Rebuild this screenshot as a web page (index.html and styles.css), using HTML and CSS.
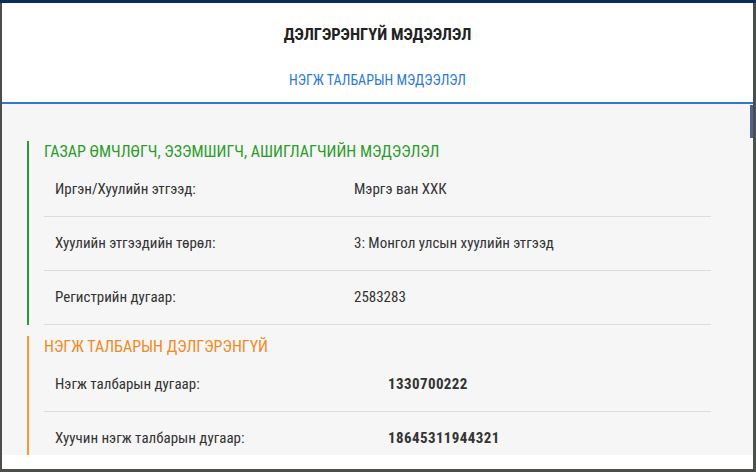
FILE: index.html
```html
<!DOCTYPE html>
<html lang="mn">
<head>
    <meta charset="UTF-8">
    <meta name="viewport" content="width=device-width, initial-scale=1.0">
    <title>Дэлгэрэнгүй мэдээлэл</title>
    <link rel="stylesheet" href="styles.css">
</head>
<body>
    <div class="topbar"></div>

    <div class="modal">
        <!-- Header -->
        <div class="modal-header">
            <h1>ДЭЛГЭРЭНГҮЙ МЭДЭЭЛЭЛ</h1>
            <div class="tabs">
                <span class="tab active">НЭГЖ ТАЛБАРЫН МЭДЭЭЛЭЛ</span>
            </div>
        </div>

        <!-- Scrollable body -->
        <div class="modal-body">
            <div class="scroll-thumb"></div>

            <div class="section green">
                <h2>ГАЗАР ӨМЧЛӨГЧ, ЭЗЭМШИГЧ, АШИГЛАГЧИЙН МЭДЭЭЛЭЛ</h2>
                <div class="row">
                    <span class="label">Иргэн/Хуулийн этгээд:</span>
                    <span class="value">Мэргэ ван ХХК</span>
                </div>
                <div class="row">
                    <span class="label">Хуулийн этгээдийн төрөл:</span>
                    <span class="value">3: Монгол улсын хуулийн этгээд</span>
                </div>
                <div class="row">
                    <span class="label">Регистрийн дугаар:</span>
                    <span class="value">2583283</span>
                </div>
            </div>

            <div class="section orange">
                <h2>НЭГЖ ТАЛБАРЫН ДЭЛГЭРЭНГҮЙ</h2>
                <div class="row wide">
                    <span class="label">Нэгж талбарын дугаар:</span>
                    <span class="value strong">1330700222</span>
                </div>
                <div class="row wide">
                    <span class="label">Хуучин нэгж талбарын дугаар:</span>
                    <span class="value strong">18645311944321</span>
                </div>
            </div>
        </div>

        <div class="modal-footer"></div>
    </div>
</body>
</html>
```

FILE: styles.css
```css
/* Reset */
body, html {
    margin: 0;
    padding: 0;
    width: 100%;
    height: 100%;
    overflow: hidden;
    font-family: Roboto, "Liberation Sans", sans-serif;
    font-stretch: 75%;
    background: #4b4f4c;
}

.topbar {
    height: 3px;
    background: #0d2c5c;
}

/* Modal box */
.modal {
    margin: 0 3px 0 2px;
    height: 466px;
    background: #fff;
    display: flex;
    flex-direction: column;
}

.modal-header {
    text-align: center;
    border-bottom: 2px solid #2f7ad0;
}

.modal-header h1 {
    margin: 0;
    padding-top: 22px;
    height: 26px;
    line-height: 20px;
    font-size: 16.5px;
    font-weight: bold;
    color: #222;
}

.tabs {
    padding: 19px 0 12px;
}

.tab {
    font-size: 14px;
    line-height: 20px;
    color: #2a7ad6;
}

/* Body */
.modal-body {
    position: relative;
    height: 351px;
    flex-shrink: 0;
    overflow: hidden;
    background: #f6f6f6;
    padding: 37px 42px 0 25px;
    box-sizing: border-box;
}

.scroll-thumb {
    position: absolute;
    top: 1px;
    right: 0;
    width: 3px;
    height: 33px;
    background: #4d6291;
}

.section {
    border-left: 2px solid;
    margin-bottom: 11px;
}

.section.green {
    border-color: #2c9a2c;
}

.section.orange {
    border-color: #f39a35;
}

.section h2 {
    margin: 0;
    padding-left: 15px;
    height: 22px;
    line-height: 22px;
    font-size: 16px;
    font-weight: normal;
}

.green h2 {
    color: #2a9c2a;
}

.orange h2 {
    color: #f08a24;
}

.row {
    margin-left: 15px;
    padding: 18px 11px;
    line-height: 17px;
    font-size: 15px;
    color: #333;
    display: flex;
    border-bottom: 1px solid #dcdcdc;
}

.label {
    width: 299px;
    flex-shrink: 0;
}

.row.wide .label {
    width: 333px;
}

.value.strong {
    font-weight: bold;
    letter-spacing: 0.4px;
}

.modal-footer {
    flex: 1;
    background: #fff;
}
```
